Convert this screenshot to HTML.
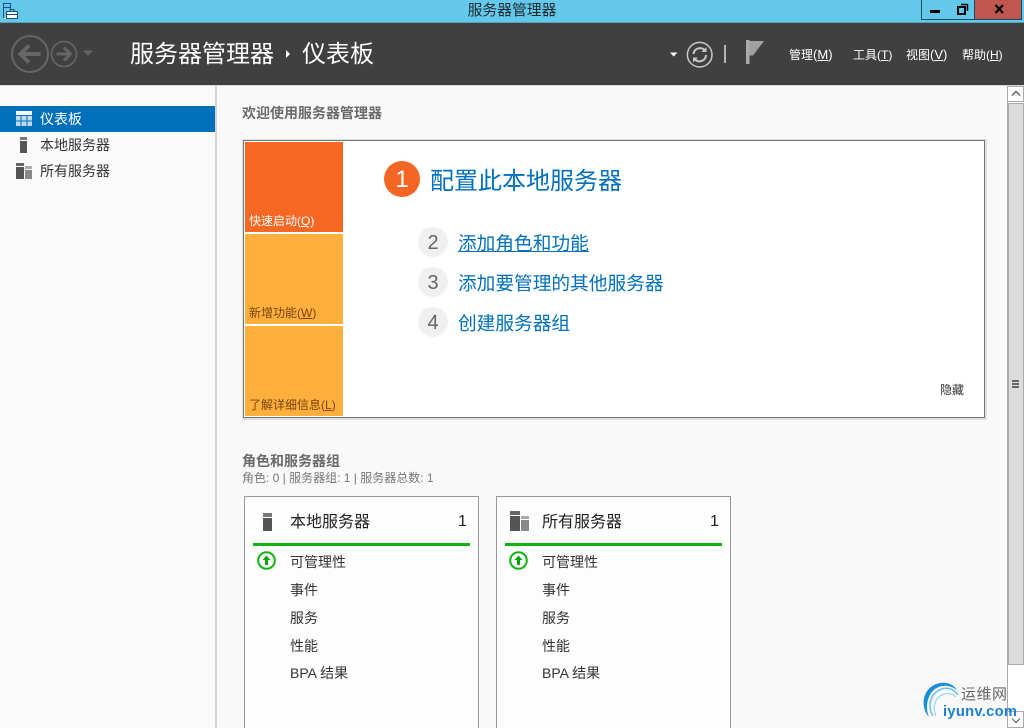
<!DOCTYPE html>
<html lang="zh">
<head>
<meta charset="utf-8">
<title>服务器管理器</title>
<style>
html,body{margin:0;padding:0;width:1024px;height:728px;overflow:hidden;background:#f9f9f9}
body{position:relative;font-family:"Liberation Sans","Noto Sans CJK SC",sans-serif;color:#333}
.a{position:absolute;white-space:nowrap}
.b{position:absolute}
svg{position:absolute;overflow:visible}
</style>
</head>
<body>
<!-- title bar -->
<div class="b" style="left:0;top:0;width:1024px;height:23px;background:#63c8ea"></div>
<div class="a" style="left:412px;top:3px;width:200px;text-align:center;font-size:14.800px;line-height:17px;color:#1c2a30">服务器管理器</div>
<svg style="left:0;top:0" width="20" height="20" viewBox="0 0 20 20"><path d="M3.500 18.500V3.500h7v6M3.500 7.500h7" fill="none" stroke="#17507e" stroke-width="1"/><path d="M3.500 18.500h3" fill="none" stroke="#fff"/><rect x="6.500" y="11.500" width="11" height="7" fill="#fff" stroke="#17507e"/><path d="M10 11.500V9.500h4v2M7 14.500h10" fill="none" stroke="#17507e"/></svg>
<!-- window buttons -->
<div class="b" style="left:921px;top:0;width:27px;height:19px;background:#63c8ea;border:1px solid #164a60;border-top:0"></div>
<div class="b" style="left:949px;top:0;width:25px;height:19px;background:#63c8ea;border:1px solid #164a60;border-top:0;border-left:0"></div>
<div class="b" style="left:975px;top:0;width:46px;height:19px;background:#c0564f;border:1px solid #164a60;border-top:0;border-left:0"></div>
<div class="b" style="left:930px;top:10px;width:10px;height:3px;background:#000"></div>
<svg style="left:957px;top:3px" width="12" height="12"><rect x="1" y="4" width="7" height="7" fill="none" stroke="#000" stroke-width="2"/><path d="M4 1.500h6.500V8" fill="none" stroke="#000" stroke-width="1.500"/></svg>
<svg style="left:994px;top:4px" width="11" height="10"><path d="M1.500 1l7.500 8M9 1L1.500 9" stroke="#000" stroke-width="2.200" fill="none"/></svg>
<!-- header -->
<div class="b" style="left:0;top:22px;width:1024px;height:1px;background:#5aa0b8"></div>
<div class="b" style="left:0;top:23px;width:1024px;height:62px;background:#404040"></div>
<div class="b" style="left:0;top:85px;width:1024px;height:1px;background:#d8d8d8"></div>
<svg style="left:10px;top:34px" width="90" height="40" viewBox="0 0 90 40">
 <circle cx="20" cy="20" r="18" fill="none" stroke="#666" stroke-width="2"/>
 <path d="M30.500 20H11M19 11.500L10.500 20 19 28.500" fill="none" stroke="#666" stroke-width="4"/>
 <circle cx="54" cy="20" r="12.500" fill="none" stroke="#666" stroke-width="1.600"/>
 <path d="M46.500 20H60M54 13.500L60.500 20 54 26.500" fill="none" stroke="#666" stroke-width="3"/>
 <path d="M73 16.500h10l-5 5z" fill="#666"/>
</svg>
<div class="a" style="left:130px;top:39px;font-size:24px;line-height:32px;color:#fff">服务器管理器</div>
<svg style="left:285px;top:49px" width="6" height="10"><path d="M1 1l4 4-4 4z" fill="#fff"/></svg>
<div class="a" style="left:302px;top:39px;font-size:24px;line-height:32px;color:#fff">仪表板</div>
<svg style="left:670px;top:52px" width="8" height="5"><path d="M0 .500h7.500L3.700 4.500z" fill="#fff"/></svg>
<svg style="left:686px;top:41px" width="28" height="28" viewBox="0 0 28 28">
 <circle cx="13.700" cy="13.700" r="12.300" fill="none" stroke="#c8c8c8" stroke-width="1.500"/>
 <path d="M7.500 13a6.500 6.500 0 0 1 11-4M20 14a6.500 6.500 0 0 1-11 4.500" fill="none" stroke="#c8c8c8" stroke-width="2"/>
 <path d="M20.500 6v5h-5zM7 21.500v-5h5z" fill="#c8c8c8"/>
</svg>
<div class="b" style="left:724px;top:45px;width:2px;height:18px;background:#b4b4b4"></div>
<svg style="left:746px;top:40px" width="20" height="25"><path d="M0 0h3.500v24H0z" fill="#aaa"/><path d="M3.500 1H18L7 15.500H3.500z" fill="#a0a0a0"/></svg>
<div class="a" style="left:789px;top:47px;font-size:12px;line-height:16px;color:#fff">管理<span style="font-size:13px">(<u>M</u>)</span></div>
<div class="a" style="left:853px;top:47px;font-size:12px;line-height:16px;color:#fff">工具(<u>T</u>)</div>
<div class="a" style="left:906px;top:47px;font-size:12px;line-height:16px;color:#fff">视图<span style="font-size:13px">(<u>V</u>)</span></div>
<div class="a" style="left:962px;top:47px;font-size:12px;line-height:16px;color:#fff">帮助(<u>H</u>)</div>
<!-- sidebar -->
<div class="b" style="left:0;top:86px;width:215px;height:642px;background:#fafafa"></div>
<div class="b" style="left:215px;top:86px;width:2px;height:642px;background:#d4d4d4"></div>
<div class="b" style="left:0;top:106px;width:215px;height:26px;background:#0070bb"></div>
<svg style="left:16px;top:111px" width="16" height="15"><path d="M0 0h16v4H0z" fill="#fff"/><path d="M0 5h4.500v4.500H0zM5.500 5h5v4.500h-5zM11.500 5H16v4.500h-4.500zM0 10.500h4.500V15H0zM5.500 10.500h5V15h-5zM11.500 10.500H16V15h-4.500z" fill="#bcdcf2"/></svg>
<div class="a" style="left:40px;top:111px;font-size:14px;line-height:17px;color:#fff">仪表板</div>
<svg style="left:20px;top:137px" width="7" height="16"><path d="M0 0h7v3H0z" fill="#777"/><path d="M0 4h7v12H0z" fill="#555"/></svg>
<div class="a" style="left:40px;top:137px;font-size:14px;line-height:17px;color:#333">本地服务器</div>
<svg style="left:16px;top:163px" width="16" height="16"><path d="M0 0h8v3H0z" fill="#666"/><path d="M0 4h8v12H0z" fill="#555"/><path d="M9 3h7v3H9z" fill="#aaa"/><path d="M9 7h7v9H9z" fill="#888"/></svg>
<div class="a" style="left:40px;top:163px;font-size:14px;line-height:17px;color:#333">所有服务器</div>
<!-- content -->
<div class="a" style="left:242px;top:105px;font-size:14px;line-height:17px;font-weight:bold;color:#6a6a6a">欢迎使用服务器管理器</div>
<div class="b" style="left:242px;top:139px;width:745px;height:281px;background:#e0e0e0"></div>
<div class="b" style="left:243px;top:140px;width:740px;height:276px;background:#fff;border:1px solid #777"></div>
<div class="b" style="left:245px;top:142px;width:98px;height:90px;background:#f66723"></div>
<div class="b" style="left:245px;top:234px;width:98px;height:90px;background:#ffb03c"></div>
<div class="b" style="left:245px;top:326px;width:98px;height:90px;background:#ffb03c"></div>
<div class="a" style="left:249px;top:213px;font-size:12px;line-height:16px;color:#fff">快速启动(<u>Q</u>)</div>
<div class="a" style="left:249px;top:305px;font-size:12px;line-height:16px;color:#7a4510">新增功能(<u>W</u>)</div>
<div class="a" style="left:249px;top:397px;font-size:12px;line-height:16px;color:#7a4510">了解详细信息(<u>L</u>)</div>

<div class="b" style="left:384px;top:161px;width:36px;height:36px;border-radius:50%;background:#f26522"></div>
<div class="a" style="left:384px;top:162px;width:36px;text-align:center;font-size:24px;line-height:36px;color:#fff">1</div>
<div class="a" style="left:430px;top:166px;font-size:24px;line-height:32px;color:#0070bb">配置此本地服务器</div>

<div class="b" style="left:418px;top:227px;width:30px;height:30px;border-radius:50%;background:#f0f0f0"></div>
<div class="a" style="left:418px;top:228px;width:30px;text-align:center;font-size:20px;line-height:30px;color:#666">2</div>
<div class="a" style="left:458px;top:231px;font-size:18.700px;line-height:26px;color:#0070bb;text-decoration:underline">添加角色和功能</div>
<div class="b" style="left:418px;top:267px;width:30px;height:30px;border-radius:50%;background:#f0f0f0"></div>
<div class="a" style="left:418px;top:268px;width:30px;text-align:center;font-size:20px;line-height:30px;color:#666">3</div>
<div class="a" style="left:458px;top:271px;font-size:18.700px;line-height:26px;color:#0070bb">添加要管理的其他服务器</div>
<div class="b" style="left:418px;top:307px;width:30px;height:30px;border-radius:50%;background:#f0f0f0"></div>
<div class="a" style="left:418px;top:308px;width:30px;text-align:center;font-size:20px;line-height:30px;color:#666">4</div>
<div class="a" style="left:458px;top:311px;font-size:18.700px;line-height:26px;color:#0070bb">创建服务器组</div>
<div class="a" style="left:940px;top:382px;font-size:12px;line-height:16px;color:#333">隐藏</div>

<div class="a" style="left:242px;top:453px;font-size:14px;line-height:17px;font-weight:bold;color:#6a6a6a">角色和服务器组</div>
<div class="a" style="left:242px;top:470px;font-size:12px;line-height:16px;color:#777">角色: 0 | 服务器组: 1 | 服务器总数: 1</div>

<!-- tile 1 -->
<div class="b" style="left:244px;top:496px;width:233px;height:240px;background:#fdfdfd;border:1px solid #999"></div>
<svg style="left:263px;top:513px" width="9" height="18"><path d="M0 0h9v4H0z" fill="#777"/><path d="M0 5h9v13H0z" fill="#555"/></svg>
<div class="a" style="left:290px;top:512px;font-size:16px;line-height:21px;color:#222">本地服务器</div>
<div class="a" style="left:458px;top:511px;font-size:16px;line-height:21px;color:#222">1</div>
<div class="b" style="left:253px;top:543px;width:217px;height:3px;background:#10b410"></div>
<svg style="left:257px;top:551px" width="19" height="19" viewBox="0 0 19 19"><circle cx="9.500" cy="9.500" r="8.300" fill="#fff" stroke="#10b410" stroke-width="2"/><path d="M9.500 4.500l4 4.500h-2.500v5H8V9H5.500z" fill="#10a010"/></svg>
<div class="a" style="left:290px;top:554px;font-size:14px;line-height:17px;color:#333">可管理性</div>
<div class="a" style="left:290px;top:582px;font-size:14px;line-height:17px;color:#333">事件</div>
<div class="a" style="left:290px;top:610px;font-size:14px;line-height:17px;color:#333">服务</div>
<div class="a" style="left:290px;top:638px;font-size:14px;line-height:17px;color:#333">性能</div>
<div class="a" style="left:290px;top:665px;font-size:14px;line-height:17px;color:#333">BPA 结果</div>

<!-- tile 2 -->
<div class="b" style="left:496px;top:496px;width:233px;height:240px;background:#fdfdfd;border:1px solid #999"></div>
<svg style="left:510px;top:511px" width="19" height="20"><path d="M0 0h10v4H0z" fill="#666"/><path d="M0 5h10v15H0z" fill="#555"/><path d="M11 5h8v3h-8z" fill="#aaa"/><path d="M11 9h8v11h-8z" fill="#888"/></svg>
<div class="a" style="left:542px;top:512px;font-size:16px;line-height:21px;color:#222">所有服务器</div>
<div class="a" style="left:710px;top:511px;font-size:16px;line-height:21px;color:#222">1</div>
<div class="b" style="left:505px;top:543px;width:217px;height:3px;background:#10b410"></div>
<svg style="left:509px;top:551px" width="19" height="19" viewBox="0 0 19 19"><circle cx="9.500" cy="9.500" r="8.300" fill="#fff" stroke="#10b410" stroke-width="2"/><path d="M9.500 4.500l4 4.500h-2.500v5H8V9H5.500z" fill="#10a010"/></svg>
<div class="a" style="left:542px;top:554px;font-size:14px;line-height:17px;color:#333">可管理性</div>
<div class="a" style="left:542px;top:582px;font-size:14px;line-height:17px;color:#333">事件</div>
<div class="a" style="left:542px;top:610px;font-size:14px;line-height:17px;color:#333">服务</div>
<div class="a" style="left:542px;top:638px;font-size:14px;line-height:17px;color:#333">性能</div>
<div class="a" style="left:542px;top:665px;font-size:14px;line-height:17px;color:#333">BPA 结果</div>

<!-- scrollbar -->
<div class="b" style="left:1007px;top:86px;width:17px;height:642px;background:#fff;border-left:1px solid #aaa;box-sizing:border-box"></div>
<div class="b" style="left:1007px;top:86px;width:17px;height:16px;background:#fff;border:1px solid #aaa;box-sizing:border-box"></div>
<svg style="left:1011px;top:90px" width="10" height="7"><path d="M1 5.500l4-4 4 4" fill="none" stroke="#666" stroke-width="1.500"/></svg>
<div class="b" style="left:1008px;top:103px;width:16px;height:562px;background:#dcdcdc;border:1px solid #aaa;box-sizing:border-box"></div>
<div class="b" style="left:1012px;top:380px;width:7px;height:2px;background:#666"></div>
<div class="b" style="left:1012px;top:383px;width:7px;height:2px;background:#666"></div>
<div class="b" style="left:1012px;top:386px;width:7px;height:2px;background:#666"></div>
<div class="b" style="left:1007px;top:711px;width:17px;height:17px;background:#fff;border:1px solid #aaa;box-sizing:border-box"></div>
<svg style="left:1011px;top:717px" width="10" height="7"><path d="M1 1.500l4 4 4-4" fill="none" stroke="#666" stroke-width="1.200"/></svg>

<!-- watermark -->
<svg style="left:918px;top:678px" width="50" height="50" viewBox="0 0 50 50">
 <path d="M11 39C1 28 5 8 22 5c7-1 13 1 17 7C32 7 24 6 17 11 9 17 7 30 11 39z" fill="#1a8fd8"/>
 <path d="M15 38C9 28 12 15 24 11c6-2 12 0 16 6" fill="none" stroke="#6cc0ee" stroke-width="1.500"/>
 <path d="M18 38C14 28 17 19 26 16c5-1 9 0 12 3" fill="none" stroke="#9ad4f4" stroke-width="1.200"/>
</svg>
<div class="a" style="left:961px;top:685px;font-size:15px;line-height:19px;color:#666;letter-spacing:.5px">运维网</div>
<div class="a" style="left:943px;top:703px;font-size:14.700px;line-height:19px;font-weight:bold;color:#1a7fd0;letter-spacing:.3px">iyunv.com</div>
</body>
</html>
